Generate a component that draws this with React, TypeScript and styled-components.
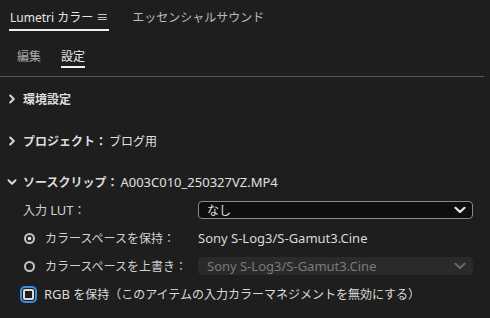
import styled, { createGlobalStyle } from 'styled-components';

const GlobalStyle = createGlobalStyle`
  html, body {
    margin: 0;
    padding: 0;
    background: #1e1e1e;
  }
  body {
    font-family: 'Noto Sans', 'Noto Sans CJK JP', sans-serif;
    font-size: 12px;
    color: #d6d6d6;
  }
`;

function Chevron({ open }: { open?: boolean }) {
  return (
    <ChevronIcon width='10' height='10' viewBox='0 0 10 10'>
      {open ? (
        <polyline points='1.5,3.2 5,6.8 8.5,3.2' />
      ) : (
        <polyline points='3.2,1.5 6.8,5 3.2,8.5' />
      )}
    </ChevronIcon>
  );
}

function SelectArrow({ disabled }: { disabled?: boolean }) {
  return (
    <ArrowIcon $disabled={disabled} width='12' height='8' viewBox='0 0 12 8'>
      <polyline points='1.5,1.8 6,6 10.5,1.8' />
    </ArrowIcon>
  );
}

export default function App() {
  return (
    <Panel>
      <GlobalStyle />

      {/* パネルタブ */}
      <PanelTabs>
        <PanelTab $active>Lumetri カラー ≡</PanelTab>
        <PanelTab>エッセンシャルサウンド</PanelTab>
      </PanelTabs>

      {/* サブタブ */}
      <SubTabs>
        <SubTab>編集</SubTab>
        <SubTab $active>設定</SubTab>
      </SubTabs>

      <Section>
        <SectionHeader>
          <Chevron />
          <strong>環境設定</strong>
        </SectionHeader>
      </Section>

      <Section>
        <SectionHeader>
          <Chevron />
          <strong>プロジェクト：</strong>
          <HeaderValue>ブログ用</HeaderValue>
        </SectionHeader>
      </Section>

      <Section $open>
        <SectionHeader>
          <Chevron open />
          <strong>ソースクリップ：</strong>
          <HeaderValue>
            <Roman>A003C010_250327VZ.MP4</Roman>
          </HeaderValue>
        </SectionHeader>

        <FieldRow>
          <Label>
            入力 <Roman>LUT</Roman>：
          </Label>
          <Select>
            <span>なし</span>
            <SelectArrow />
          </Select>
        </FieldRow>

        <FieldRow>
          <Label>
            <Radio $checked />
            カラースペースを保持：
          </Label>
          <Value>
            <Roman>Sony S-Log3/S-Gamut3.Cine</Roman>
          </Value>
        </FieldRow>

        <FieldRow>
          <Label>
            <Radio />
            カラースペースを上書き：
          </Label>
          <Select $disabled>
            <Roman>Sony S-Log3/S-Gamut3.Cine</Roman>
            <SelectArrow disabled />
          </Select>
        </FieldRow>

        <CheckRow>
          <CheckFocus>
            <CheckBox />
          </CheckFocus>
          <span>
            <Roman>RGB</Roman> を保持（このアイテムの入力カラーマネジメントを無効にする）
          </span>
        </CheckRow>
      </Section>
    </Panel>
  );
}

const Panel = styled.div`
  width: 490px;
  height: 318px;
  overflow: hidden;
  display: flex;
  flex-direction: column;
`;

const Roman = styled.span`
  font-size: 13px;
`;

const PanelTabs = styled.div`
  display: flex;
  gap: 22px;
  padding: 10px 0 0 9px;
`;

const PanelTab = styled.div<{ $active?: boolean }>`
  line-height: 16px;
  padding: 0 1px 3px;
  color: ${({ $active }) => ($active ? '#e6e6e6' : '#bcbcbc')};
  border-bottom: 2px solid ${({ $active }) => ($active ? '#f0f0f0' : 'transparent')};
`;

const SubTabs = styled.div`
  display: flex;
  gap: 20px;
  padding: 18px 0 8px 17px;
  margin-right: 6px;
  border-bottom: 1px solid #575757;
`;

const SubTab = styled.div<{ $active?: boolean }>`
  line-height: 16px;
  padding-bottom: 1px;
  color: ${({ $active }) => ($active ? '#e8e8e8' : '#a8a8a8')};
  border-bottom: 2px solid ${({ $active }) => ($active ? '#f0f0f0' : 'transparent')};
`;

const Section = styled.div<{ $open?: boolean }>`
  padding: ${({ $open }) => ($open ? '7px 0 0' : '8px 0 6px')};
`;

const SectionHeader = styled.div`
  height: 28px;
  display: flex;
  align-items: center;
  padding-left: 7px;
  color: #dcdcdc;

  strong {
    font-weight: 700;
    margin-left: 6px;
  }
`;

const HeaderValue = styled.span`
  font-weight: 400;
  margin-left: 2px;
  color: #e0e0e0;
`;

const ChevronIcon = styled.svg`
  flex: none;
  fill: none;
  stroke: #d8d8d8;
  stroke-width: 2;
  stroke-linecap: round;
  stroke-linejoin: round;
`;

const FieldRow = styled.div`
  height: 28px;
  display: grid;
  grid-template-columns: 175px 275px;
  align-items: center;
  padding-left: 23px;
`;

const Label = styled.div`
  display: flex;
  align-items: center;
  white-space: pre;
  color: #d2d2d2;
`;

const Value = styled.div`
  color: #dadada;
`;

const Radio = styled.span<{ $checked?: boolean }>`
  flex: none;
  box-sizing: border-box;
  width: 11px;
  height: 11px;
  margin: 0 10px 0 1px;
  border-radius: 50%;
  border: 2px solid #c4c4c4;
  background: ${({ $checked }) =>
    $checked ? 'radial-gradient(circle, #d8d8d8 0 1.6px, #1e1e1e 2.2px)' : '#1e1e1e'};
`;

const Select = styled.div<{ $disabled?: boolean }>`
  box-sizing: border-box;
  height: 18px;
  display: flex;
  align-items: center;
  justify-content: space-between;
  padding: 0 6px 0 8px;
  border-radius: 4px;
  background: ${({ $disabled }) => ($disabled ? '#2a2a2a' : '#0e0e0e')};
  border: 1px solid ${({ $disabled }) => ($disabled ? '#2a2a2a' : '#8a8a8a')};
  color: ${({ $disabled }) => ($disabled ? '#7a7a7a' : '#e0e0e0')};
`;

const ArrowIcon = styled.svg<{ $disabled?: boolean }>`
  fill: none;
  stroke: ${({ $disabled }) => ($disabled ? '#666' : '#e6e6e6')};
  stroke-width: 2.2;
  stroke-linecap: round;
  stroke-linejoin: round;
`;

const CheckRow = styled.div`
  height: 28px;
  display: flex;
  align-items: center;
  gap: 7px;
  padding-left: 20px;
  color: #dadada;
`;

const CheckFocus = styled.span`
  box-sizing: border-box;
  width: 17px;
  height: 17px;
  display: flex;
  align-items: center;
  justify-content: center;
  border-radius: 5px;
  border: 2px solid #3b8ede;
`;

const CheckBox = styled.span`
  box-sizing: border-box;
  width: 11px;
  height: 11px;
  border-radius: 2px;
  border: 2px solid #dcdcdc;
  background: #1e1e1e;
`;
